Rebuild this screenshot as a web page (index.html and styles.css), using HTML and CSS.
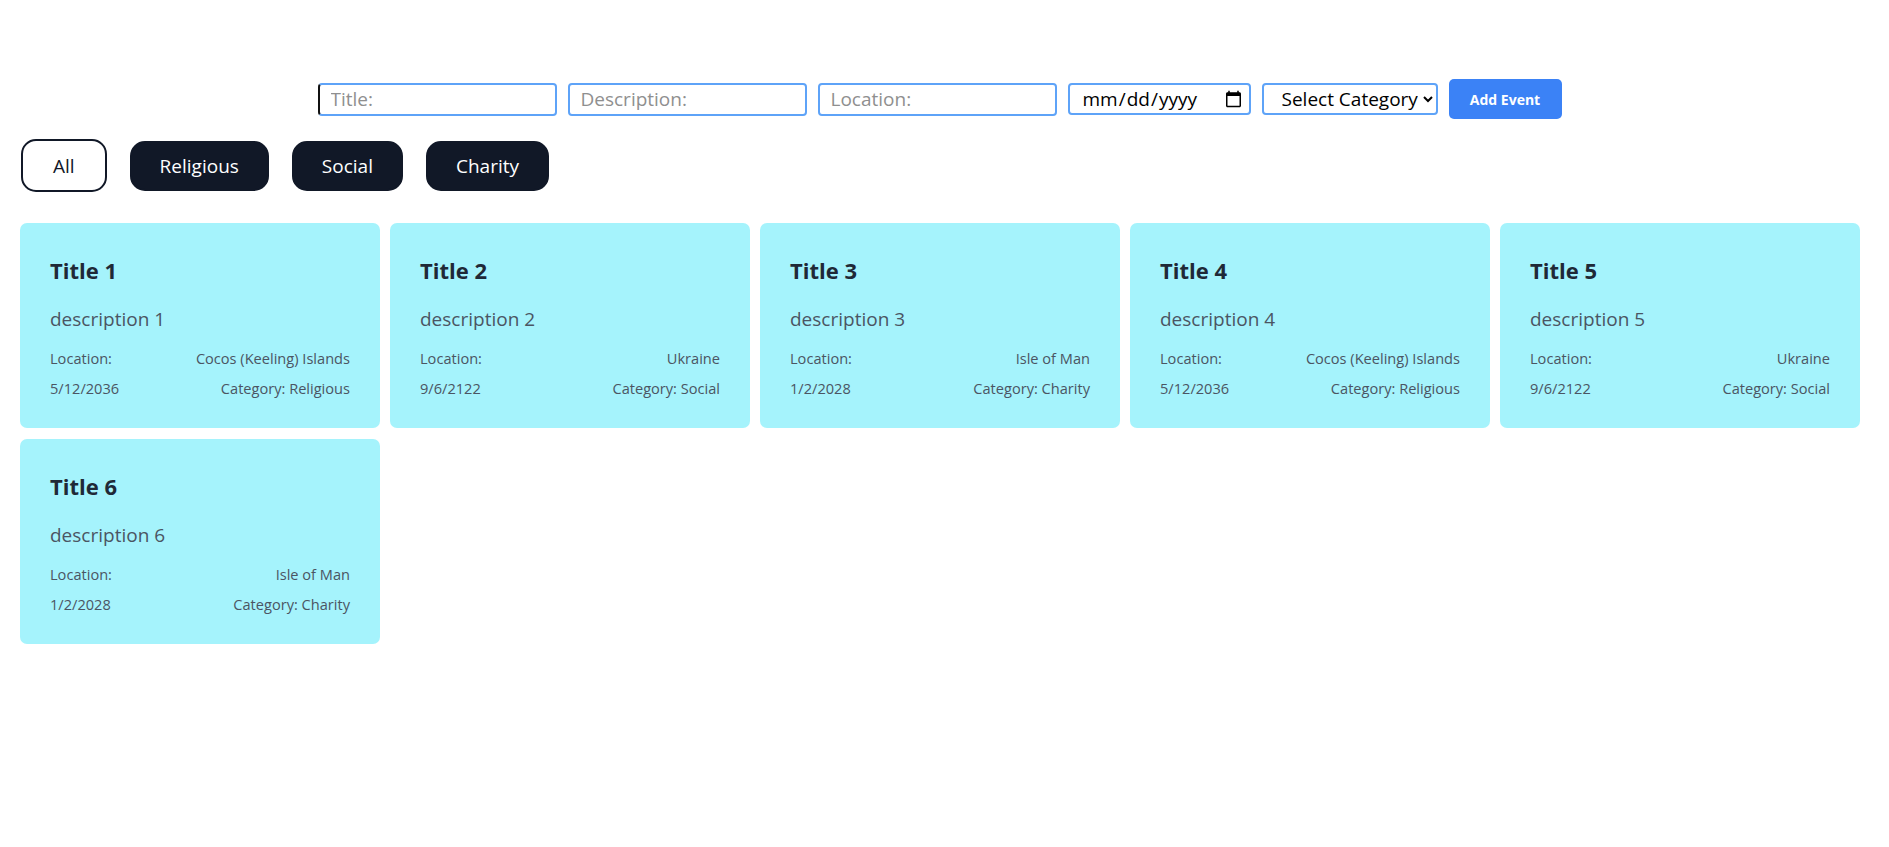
FILE: index.html
```html
<!DOCTYPE html>
<html lang="en">
<head>
<meta charset="utf-8">
<title>Events</title>
<link rel="stylesheet" href="styles.css">
</head>
<body>
<div class="app">
  <form class="event-form">
    <input class="field field-first" type="text" placeholder="Title:">
    <input class="field" type="text" placeholder="Description:">
    <input class="field" type="text" placeholder="Location:">
    <input class="field field-date" type="date">
    <select class="field field-select">
      <option>Select Category</option>
      <option>Religious</option>
      <option>Social</option>
      <option>Charity</option>
    </select>
    <button class="add-btn" type="button">Add Event</button>
  </form>

  <div class="filters">
    <button class="filter filter-active" type="button">All</button>
    <button class="filter" type="button">Religious</button>
    <button class="filter" type="button">Social</button>
    <button class="filter" type="button">Charity</button>
  </div>

  <div class="cards">
    <div class="card">
      <h2 class="card-title">Title 1</h2>
      <p class="card-desc">description 1</p>
      <div class="card-row"><span>Location:</span><span>Cocos (Keeling) Islands</span></div>
      <div class="card-row"><span>5/12/2036</span><span>Category: Religious</span></div>
    </div>
    <div class="card">
      <h2 class="card-title">Title 2</h2>
      <p class="card-desc">description 2</p>
      <div class="card-row"><span>Location:</span><span>Ukraine</span></div>
      <div class="card-row"><span>9/6/2122</span><span>Category: Social</span></div>
    </div>
    <div class="card">
      <h2 class="card-title">Title 3</h2>
      <p class="card-desc">description 3</p>
      <div class="card-row"><span>Location:</span><span>Isle of Man</span></div>
      <div class="card-row"><span>1/2/2028</span><span>Category: Charity</span></div>
    </div>
    <div class="card">
      <h2 class="card-title">Title 4</h2>
      <p class="card-desc">description 4</p>
      <div class="card-row"><span>Location:</span><span>Cocos (Keeling) Islands</span></div>
      <div class="card-row"><span>5/12/2036</span><span>Category: Religious</span></div>
    </div>
    <div class="card">
      <h2 class="card-title">Title 5</h2>
      <p class="card-desc">description 5</p>
      <div class="card-row"><span>Location:</span><span>Ukraine</span></div>
      <div class="card-row"><span>9/6/2122</span><span>Category: Social</span></div>
    </div>
    <div class="card">
      <h2 class="card-title">Title 6</h2>
      <p class="card-desc">description 6</p>
      <div class="card-row"><span>Location:</span><span>Isle of Man</span></div>
      <div class="card-row"><span>1/2/2028</span><span>Category: Charity</span></div>
    </div>
  </div>
</div>
</body>
</html>
```

FILE: styles.css
```css
* {
  box-sizing: border-box;
}

html, body {
  margin: 0;
  padding: 0;
  background: #ffffff;
}

body {
  font-family: "Segoe UI", "Open Sans", "Noto Sans", sans-serif;
  color: #111827;
}

.app {
  padding-top: 79px;
}

.event-form {
  display: flex;
  justify-content: center;
  align-items: center;
  gap: 11px;
  height: 40px;
  margin: 0;
  padding-right: 10px;
}

.field {
  height: 33px;
  width: 239px;
  border: 2px solid #5ea3f8;
  border-radius: 4px;
  padding: 0 11px;
  font-family: inherit;
  font-size: 19px;
  color: #000;
  background: #fff;
  outline: none;
}

.field::placeholder {
  color: #8f8f8f;
}

.field-first {
  border-left-color: #111;
}

.field-date {
  width: 183px;
  padding: 0 4px 0 12px;
  height: 32px;
}

.field-select {
  width: 176px;
  height: 32px;
  padding: 0 2px 0 14px;
}

.add-btn {
  height: 40px;
  width: 113px;
  border: none;
  border-radius: 5px;
  background: #3b82f6;
  color: #fff;
  font-family: inherit;
  font-weight: 700;
  font-size: 14px;
  cursor: pointer;
}

.filters {
  display: flex;
  align-items: center;
  gap: 23px;
  padding-left: 21px;
  margin-top: 20px;
  height: 53px;
}

.filter {
  height: 50px;
  padding: 0 28px;
  border: 2px solid #111827;
  border-radius: 15px;
  background: #111827;
  color: #fff;
  font-family: inherit;
  font-size: 19px;
}

.filter-active {
  height: 53px;
  background: #fff;
  color: #111827;
  padding: 0 30px;
}

.cards {
  display: grid;
  grid-template-columns: repeat(5, 360px);
  gap: 11px 10px;
  padding: 0 20px;
  margin-top: 31px;
}

.card {
  background: #a5f3fc;
  border-radius: 7px;
  padding: 31px 30px 30px;
}

.card-title {
  margin: 0 0 19px;
  font-size: 22px;
  line-height: 32px;
  font-weight: 700;
  color: #1f2937;
}

.card-desc {
  margin: 0 0 15px;
  font-size: 19px;
  line-height: 28px;
  color: #4b5563;
}

.card-row {
  display: flex;
  justify-content: space-between;
  font-size: 14.6px;
  line-height: 20px;
  color: #4b5563;
}

.card-row + .card-row {
  margin-top: 10px;
}
```
